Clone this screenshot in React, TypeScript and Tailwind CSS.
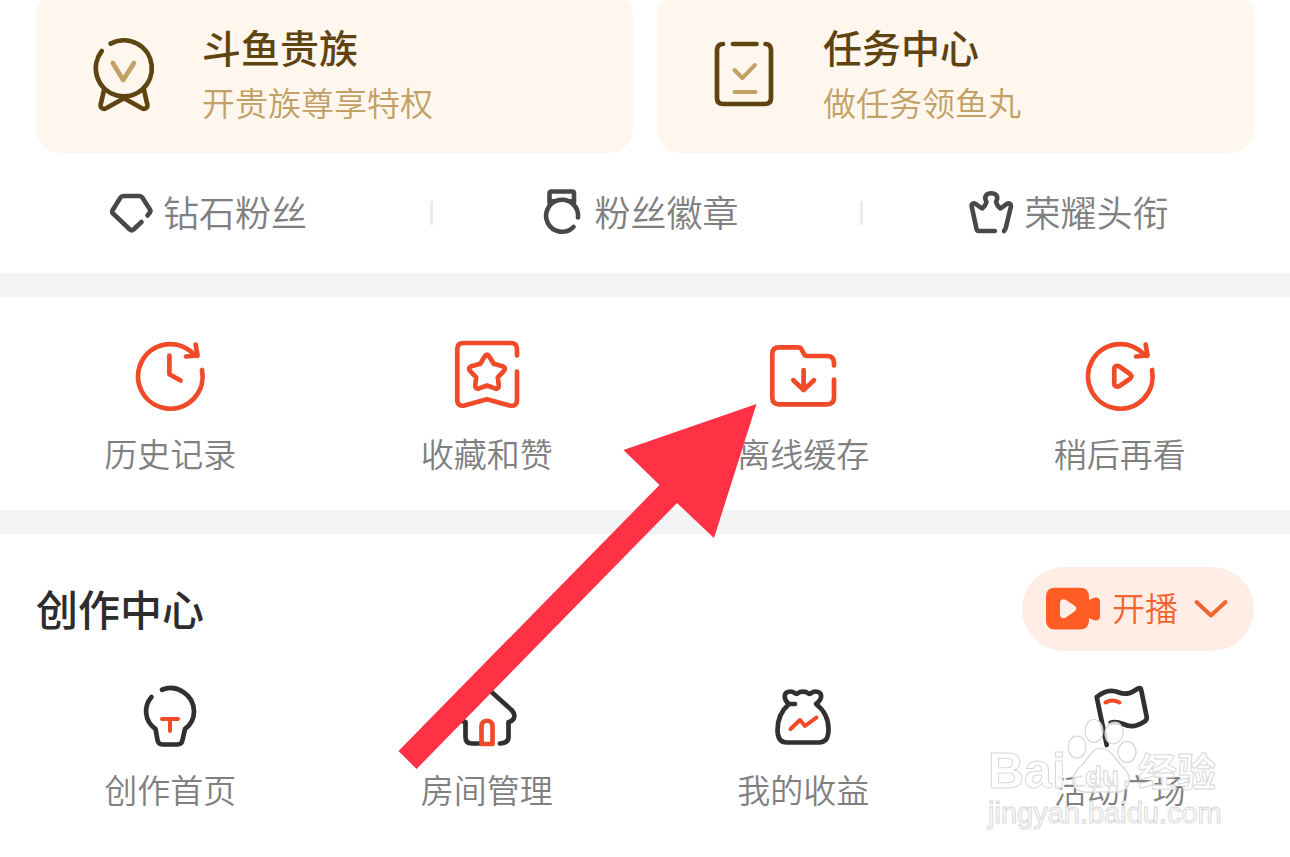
import type { ReactNode } from "react";

type IconProps = { children: ReactNode };

type Entry = {
  label: string;
  icon: ReactNode;
};

function LinkIcon({ children }: IconProps) {
  return (
    <svg
      className="h-12 w-12 shrink-0"
      viewBox="0 0 48 48"
      fill="none"
      stroke="#484848"
      strokeWidth="4.6"
      strokeLinecap="round"
      strokeLinejoin="round"
      aria-hidden="true"
    >
      {children}
    </svg>
  );
}

function GridIcon({ children, stroke }: IconProps & { stroke: string }) {
  return (
    <svg
      className="h-20 w-20"
      viewBox="0 0 80 80"
      fill="none"
      stroke={stroke}
      strokeWidth="4.7"
      strokeLinecap="round"
      strokeLinejoin="round"
      aria-hidden="true"
    >
      {children}
    </svg>
  );
}

function CardIcon({ children }: IconProps) {
  return (
    <svg
      className="h-20 w-[72px] shrink-0"
      viewBox="0 -2 72 80"
      fill="none"
      stroke="#5f4412"
      strokeWidth="4.7"
      strokeLinecap="round"
      strokeLinejoin="round"
      aria-hidden="true"
    >
      {children}
    </svg>
  );
}

const RED = "#f04a28";
const DARK = "#303030";
const GOLD = "#c2a066";

const cards = [
  {
    title: "斗鱼贵族",
    desc: "开贵族尊享特权",
    icon: (
      <CardIcon>
        <path d="M22.6 7.6A28 28 0 1 1 13.8 15" />
        <path d="M16 54L12.7 68.5C12.1 71.8 15 73.8 18 72.2L36 62.2L54 72.2C57 73.8 59.9 71.8 59.3 68.5L56 54" />
        <path stroke={GOLD} d="M24.8 27L35.2 44L46 27" />
      </CardIcon>
    ),
  },
  {
    title: "任务中心",
    desc: "做任务领鱼丸",
    icon: (
      <CardIcon>
        <path d="M14 8C10.5 8 8 10 8 14V62C8 66 10 68 14 68H56C60 68 62 66 62 62V14C62 10 59.5 8 56.5 8" />
        <path d="M24 8H47.5" />
        <path stroke={GOLD} strokeWidth="4" d="M25.5 34L33.3 42L46 29M25.5 56H46.5" />
      </CardIcon>
    ),
  },
];

const links: Entry[] = [
  {
    label: "钻石粉丝",
    icon: (
      <LinkIcon>
        <path d="M34.5 33L26.5 40.5Q24.7 42 22.9 40.5L6 24.5Q4.5 23 5.7 21L13.5 8.5Q14.5 7 16.3 7H32.5Q34.3 7 35.3 8.5L43 20.5Q44 22 42.8 23.5L40.5 26.5" />
      </LinkIcon>
    ),
  },
  {
    label: "粉丝徽章",
    icon: (
      <LinkIcon>
        <path d="M11.5 14V4.5Q11.5 2.5 13.5 2.5H34Q36 2.5 36 4.5V14" />
        <path d="M12.5 11.5H35" strokeWidth="3" />
        <path d="M40 28.5A16 16 0 1 0 35.5 38" />
      </LinkIcon>
    ),
  },
  {
    label: "荣耀头衔",
    icon: (
      <LinkIcon>
        <path d="M26.8 42H11Q8.9 42 8.5 39.8L3.8 18C3 14.5 5.5 13.5 8 15.2L14 19.5C16 18 17.5 17 18.5 13C15 6.5 19.5 4.3 23.2 4.3C27 4.3 31.5 6.5 28 13C29 17 30.5 18 32.5 19.5L38.5 15.2C41 13.5 43.5 14.5 42.8 18L38 38Q37.5 40.5 36 42" />
      </LinkIcon>
    ),
  },
];

const tools: Entry[] = [
  {
    label: "历史记录",
    icon: (
      <GridIcon stroke={RED}>
        <path d="M72 33A32.3 32.3 0 1 1 64.1 17.5L67 19" />
        <path d="M65.7 7.5L67.5 18.5L56 19.5" />
        <path d="M39.4 18.5V37.2L50.6 43.5" />
      </GridIcon>
    ),
  },
  {
    label: "收藏和赞",
    icon: (
      <GridIcon stroke={RED}>
        <path d="M70 18.5V12Q70 6 64 6H16.3Q10.3 6 10.3 12V63C10.3 67.5 13 69.5 17.5 68.5L40 62.2L62.5 68.5C67 69.5 70 67.5 70 63V34.5" />
        <path d="M37.7 19.5Q40 15.5 42.3 19.5L46.7 26.8L55.5 29.2Q59.5 30.8 57 33.8L50.8 40.3L51.8 48.5Q51.8 52.5 48 51.4L40 48.5L32 51.4Q28.2 52.5 28.2 48.5L29.2 40.3L23 33.8Q20.5 30.8 24.5 29.2L33.3 26.8Z" />
      </GridIcon>
    ),
  },
  {
    label: "离线缓存",
    icon: (
      <GridIcon stroke={RED}>
        <path d="M71 28.5V26Q71 19 64 19H44Q42 19 41 17L38.5 12.3Q37.5 10.3 35 10.3H16Q9.3 10.3 9.3 17V60.5Q9.3 67.3 16 67.3H64Q71 67.3 71 60.5V42.5" />
        <path d="M40.6 33V53M30.3 43.2L40.6 53L51 43.2" />
      </GridIcon>
    ),
  },
  {
    label: "稍后再看",
    icon: (
      <GridIcon stroke={RED}>
        <path d="M72 33A32.3 32.3 0 1 1 64.1 17.5L67 19" />
        <path d="M65.7 7.5L67.5 18.5L56 19.5" />
        <path d="M34.3 32V46.5C34.3 49.5 37 50.5 39.5 49L50 41.7Q52.8 39.3 50 37L39.5 29.5C37 28 34.3 29 34.3 32Z" />
      </GridIcon>
    ),
  },
];

const creatorTools: Entry[] = [
  {
    label: "创作首页",
    icon: (
      <GridIcon stroke={DARK}>
        <path d="M32 16.7C46 11 64 21 64 38.5C64 47 60.5 52 55 56L52.5 67Q51.8 71.5 47.5 71.5H32.5Q28.2 71.5 27.5 67L25.5 56C14 48 13.5 33 21.5 24" />
        <path stroke={RED} strokeWidth="4" d="M32 46H48M40 46V58" />
      </GridIcon>
    ),
  },
  {
    label: "房间管理",
    icon: (
      <GridIcon stroke={DARK}>
        <path d="M34 70.5H25Q18.5 70.5 18.5 64V49C11 47.5 10.5 42 14.5 38.5L36 18.5Q40 15 44 18.5L65 37.5C68.5 41 68.5 47.5 61.5 49V64Q61.5 70 53 70.5" />
        <path stroke={RED} d="M34.5 71V53C34.5 46 45.5 46 45.5 53V71Z" />
      </GridIcon>
    ),
  },
  {
    label: "我的收益",
    icon: (
      <GridIcon stroke={DARK}>
        <path d="M32 31H26C20 26 20 18.5 28 18.5C31.5 18.5 32 22 34.5 20.5C37.5 18 42.5 18 45.5 20.5C48 22 48.5 18.5 52 18.5C60 18.5 60 26 53 31C62 38 65.5 47 65.5 56C65.5 66 62 69.5 56 69.5H24C18 69.5 14.5 66 14.5 57C14.5 47 18 38 26 31" />
        <path stroke={RED} strokeWidth="4" d="M27.5 56L37 47L42 53L53.5 44.5" />
      </GridIcon>
    ),
  },
  {
    label: "活动广场",
    icon: (
      <GridIcon stroke={DARK}>
        <path d="M26.7 72L16.7 24C25 17 32 16.5 39 19.5C47 22.5 52 19.5 58 15.5Q60.7 14 61.2 17L66.7 44Q67 47 64.5 48.5C55 54.5 50 54 43 51C38 49 35 48.5 30.7 49.7" />
        <path stroke={RED} strokeWidth="4" d="M25.5 29.5Q32 25.5 39.5 29.5" />
      </GridIcon>
    ),
  },
];

function EntryGrid({ entries }: { entries: Entry[] }) {
  return (
    <ul className="grid grid-cols-4 px-3">
      {entries.map((e) => (
        <li key={e.label}>
          <a href="#" className="flex flex-col items-center gap-3">
            {e.icon}
            <span className="text-[33px] leading-12 font-[350] text-[#808080]">{e.label}</span>
          </a>
        </li>
      ))}
    </ul>
  );
}

function Watermark() {
  return (
    <div className="pointer-events-none absolute top-[717px] right-[68px] w-[234px] text-white/90 [-webkit-text-stroke:1px_#d8d8d8]">
      <div className="flex h-20 items-end font-bold">
        <span className="w-[78px] font-['Liberation_Sans'] text-[50px] leading-[52px]">Bai</span>
        <div className="relative h-20 w-[72px]">
          <svg
            className="h-20 w-[72px]"
            viewBox="0 0 72 80"
            fill="#ffffff"
            fillOpacity="0.8"
            stroke="#d4d4d4"
            strokeWidth="1.2"
            aria-hidden="true"
          >
            <ellipse cx="11" cy="30" rx="9" ry="11" />
            <ellipse cx="28" cy="14" rx="9" ry="11.5" />
            <ellipse cx="48" cy="16" rx="9" ry="11" transform="rotate(12 48 16)" />
            <ellipse cx="61" cy="35" rx="9" ry="10.5" />
            <path d="M35 31C44 31 48 41 55 48C63 55 65 63 62 69C58 77 48 75 35 75C22 75 12 77 8 69C5 63 8 55 16 48C23 41 26 31 35 31Z" />
          </svg>
          <span className="absolute inset-x-0 bottom-1 text-center font-['Liberation_Sans'] text-[28px] leading-8">
            du
          </span>
        </div>
        <span className="text-[39px] leading-14">经验</span>
      </div>
      <p className="font-['Liberation_Sans'] text-[29px] leading-8">jingyan.baidu.com</p>
    </div>
  );
}

function PointerArrow() {
  return (
    <svg
      className="pointer-events-none absolute top-[400px] left-[396px] h-[372px] w-[364px]"
      viewBox="0 0 364 372"
      fill="#ff3145"
      aria-hidden="true"
    >
      <path d="M360.5 4L318 138L281 103L20.5 369L2.5 351L263.5 85L227.5 50Z" />
    </svg>
  );
}

export default function App() {
  return (
    <main className="relative overflow-hidden bg-white pb-10 font-['Noto_Sans_CJK_SC',sans-serif]">
      <section className="-mt-2 grid grid-cols-2 gap-6 px-9">
        {cards.map((c) => (
          <a
            key={c.title}
            href="#"
            className="flex items-center gap-[42px] rounded-3xl bg-[#fff7ed] pt-[26px] pb-[23px] pl-[52px]"
          >
            {c.icon}
            <div>
              <h2 className="text-[39px] leading-14 font-medium text-[#5f4412]">{c.title}</h2>
              <p className="text-[33px] leading-14 font-[350] text-[#c2a066]">{c.desc}</p>
            </div>
          </a>
        ))}
      </section>

      <nav className="grid h-[120px] grid-cols-3">
        {links.map((l, i) => (
          <div key={l.label} className="flex items-center">
            {i > 0 ? <span className="h-6 w-[3px] bg-[#ececec]" /> : null}
            <a href="#" className="flex flex-1 items-center justify-center gap-2 pr-4">
              {l.icon}
              <span className="pb-1 text-4xl font-[350] text-[#808080]">{l.label}</span>
            </a>
          </div>
        ))}
      </nav>

      <div className="h-6 bg-[#f3f4f6]" />

      <section className="pt-10 pb-[33px]">
        <EntryGrid entries={tools} />
      </section>

      <div className="h-6 bg-[#f3f4f6]" />

      <section className="pt-[33px]">
        <header className="mb-[22px] flex items-center justify-between px-9">
          <h2 className="pb-1 text-[42px] font-medium text-[#2d2d2d]">创作中心</h2>
          <button
            type="button"
            className="flex h-[84px] items-center rounded-full bg-[#ffede6] px-6 text-[#f26430]"
          >
            <svg className="h-12 w-14" viewBox="0 0 56 48" aria-hidden="true">
              <path
                fill="#ff5d23"
                d="M9 2.7H34Q43 2.7 43 11.7V15L48 12.8Q54 11.5 54 17V31Q54 36.5 48 35.2L43 33V35.5Q43 44.5 34 44.5H9Q0 44.5 0 35.5V11.7Q0 2.7 9 2.7Z"
              />
              <path
                fill="#ffede6"
                d="M14 18V29.5C14 33 17 34 20 32.5L29 26Q31.8 23.5 29 21L20 15C17 13.3 14 14.5 14 18Z"
              />
            </svg>
            <span className="mr-4 ml-2.5 pb-0.5 text-[33px] font-[350]">开播</span>
            <svg
              className="h-9 w-9"
              viewBox="0 0 36 36"
              fill="none"
              stroke="currentColor"
              strokeWidth="4"
              aria-hidden="true"
            >
              <path strokeLinecap="round" strokeLinejoin="round" d="M2.5 11L17 24.5L31.5 11" />
            </svg>
          </button>
        </header>
        <EntryGrid entries={creatorTools} />
      </section>

      <PointerArrow />
      <Watermark />
    </main>
  );
}
